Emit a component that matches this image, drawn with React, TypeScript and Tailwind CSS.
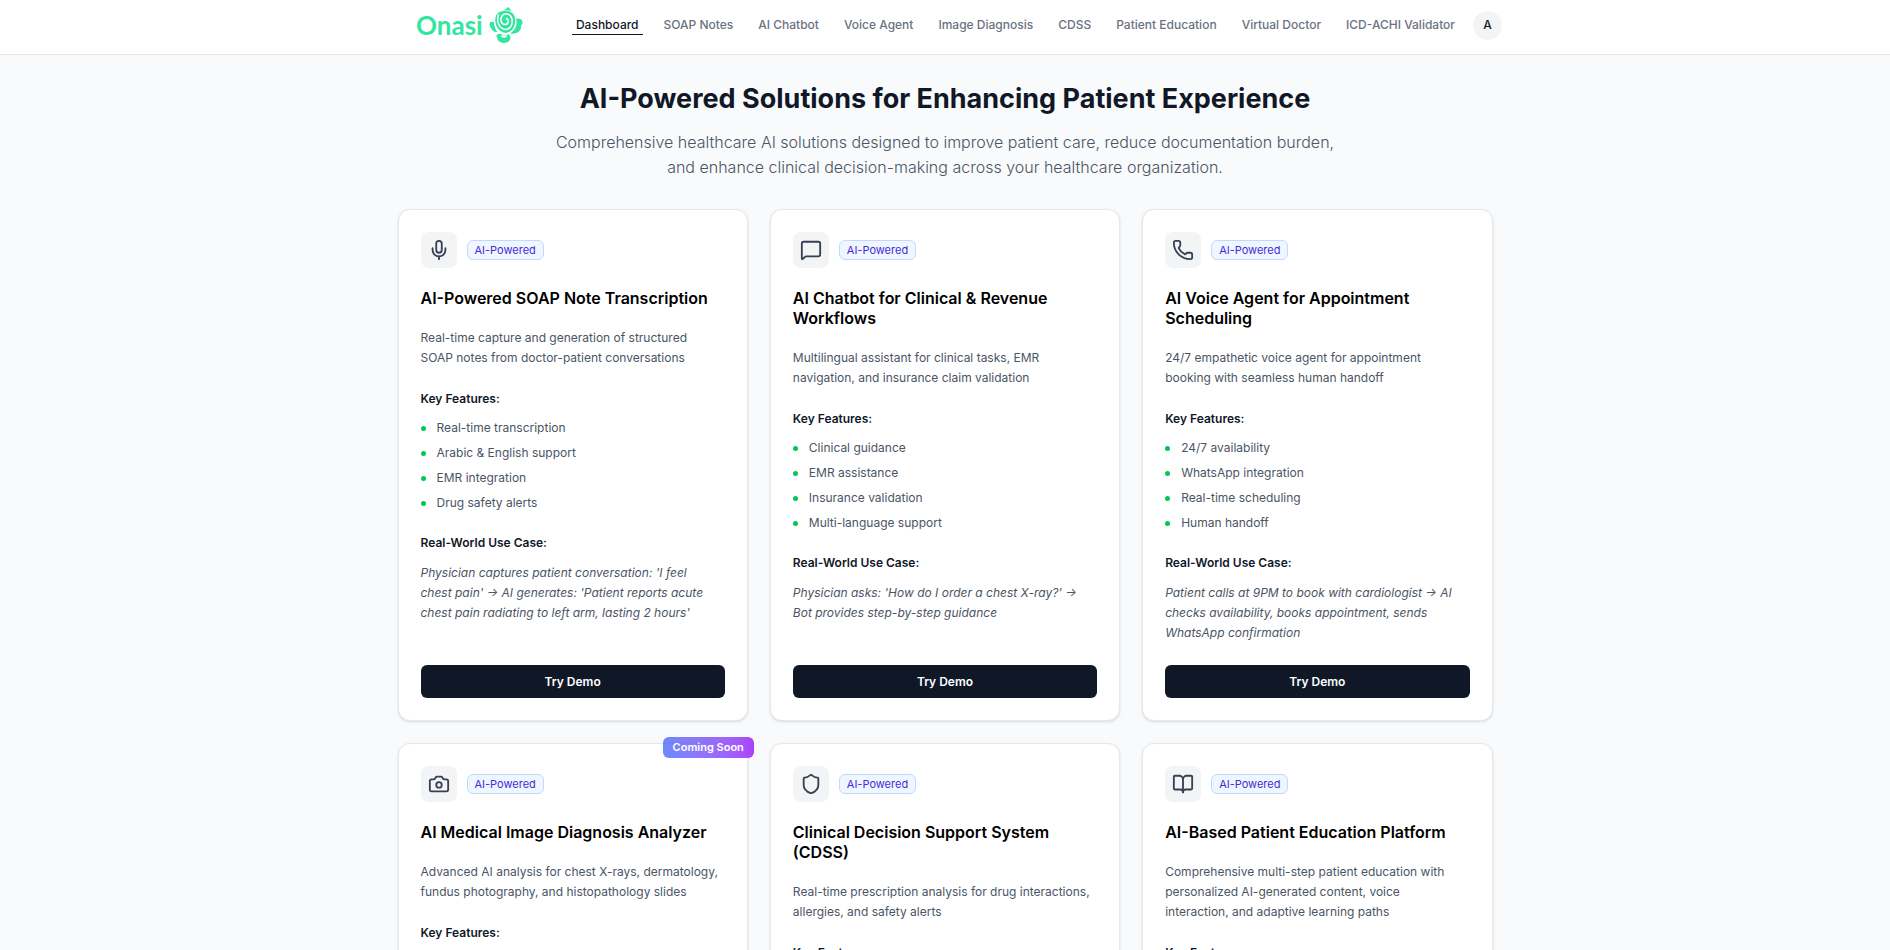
import {
  BookOpen,
  Camera,
  MessageSquare,
  Mic,
  Phone,
  Shield,
  type LucideIcon,
} from "lucide-react";

interface Solution {
  icon: LucideIcon;
  title: string;
  description: string;
  features: string[];
  useCase: string;
  comingSoon?: boolean;
}

const NAV_ITEMS = [
  "Dashboard",
  "SOAP Notes",
  "AI Chatbot",
  "Voice Agent",
  "Image Diagnosis",
  "CDSS",
  "Patient Education",
  "Virtual Doctor",
  "ICD-ACHI Validator",
];

const SOLUTIONS: Solution[] = [
  {
    icon: Mic,
    title: "AI-Powered SOAP Note Transcription",
    description: "Real-time capture and generation of structured SOAP notes from doctor-patient conversations",
    features: ["Real-time transcription", "Arabic & English support", "EMR integration", "Drug safety alerts"],
    useCase:
      "Physician captures patient conversation: 'I feel chest pain' → AI generates: 'Patient reports acute chest pain radiating to left arm, lasting 2 hours'",
  },
  {
    icon: MessageSquare,
    title: "AI Chatbot for Clinical & Revenue Workflows",
    description: "Multilingual assistant for clinical tasks, EMR navigation, and insurance claim validation",
    features: ["Clinical guidance", "EMR assistance", "Insurance validation", "Multi-language support"],
    useCase: "Physician asks: 'How do I order a chest X-ray?' → Bot provides step-by-step guidance",
  },
  {
    icon: Phone,
    title: "AI Voice Agent for Appointment Scheduling",
    description: "24/7 empathetic voice agent for appointment booking with seamless human handoff",
    features: ["24/7 availability", "WhatsApp integration", "Real-time scheduling", "Human handoff"],
    useCase:
      "Patient calls at 9PM to book with cardiologist → AI checks availability, books appointment, sends WhatsApp confirmation",
  },
  {
    icon: Camera,
    title: "AI Medical Image Diagnosis Analyzer",
    description: "Advanced AI analysis for chest X-rays, dermatology, fundus photography, and histopathology slides",
    features: ["Chest X-ray analysis", "Dermatology", "Fundus photography", "Histopathology"],
    useCase: "Physician uploads a chest X-ray → AI highlights findings for review",
    comingSoon: true,
  },
  {
    icon: Shield,
    title: "Clinical Decision Support System (CDSS)",
    description: "Real-time prescription analysis for drug interactions, allergies, and safety alerts",
    features: ["Drug interactions", "Allergy checks", "Safety alerts", "Prescription analysis"],
    useCase: "Physician prescribes a new drug → AI flags an interaction",
  },
  {
    icon: BookOpen,
    title: "AI-Based Patient Education Platform",
    description:
      "Comprehensive multi-step patient education with personalized AI-generated content, voice interaction, and adaptive learning paths",
    features: ["Multi-step education", "Personalized content", "Voice interaction", "Adaptive learning"],
    useCase: "Patient opens a lesson → AI adapts it to their answers",
  },
];

function Logo() {
  return (
    <a href="#" className="flex items-center gap-1.5 text-[#34e5a0]">
      <span className="font-[Lato,sans-serif] text-[26px] leading-8 font-bold">Onasi</span>
      <svg viewBox="0 0 34 36" className="h-9 w-[34px]" fill="none" aria-hidden="true">
        {/* outer petals */}
        <path d="M14 3.500C16 2.500 17.500 1.500 19.500 0c1 1.500 2 2.500 3 4-3-.9-5.500-1-8.500-.5Z" fill="currentColor" />
        <path d="M1 15c2 .3 3.500 0 4-.5 0 4.500 1 7.500 3.500 10.500-3 .5-5.500-1-6-3.500C.5 20 .3 17 1 15Z" fill="currentColor" />
        <path d="M27 11.500c3.500-.5 6 .8 6.500 3 .4 2-.5 3-1.500 4 .8 5-3.500 9-11 8 6-4 7.500-9 6-15Z" fill="currentColor" />
        <path d="M7.500 28c2-1.500 4-1.500 5.500-.5 2 1.200 4.500 1 6.500-.5 1 1 2 2.500 2 4-.5 3.500-3.500 5-7 5s-7-3-7-8Z" fill="currentColor" />
        <path d="M11.500 28.500c1.500 3 5.500 3 7 0Z" fill="white" />
        {/* bloom */}
        <path d="M8 7c4-4.500 14-4.500 17 1 3.500 7-.5 17.500-8.500 18C8 25.500 3.500 14 8 7Z" fill="currentColor" />
        <path
          d="M9.500 8c-2.500 6.500 1 14 7 14.500 5 0 7.500-5.500 6.500-10.500-1-5-7-7-10-3-2.500 4-.5 8.500 3 8.500 3.500-.3 4.500-4.500 1.500-6"
          stroke="white"
          strokeWidth="1.500"
          strokeLinecap="round"
        />
      </svg>
    </a>
  );
}

function Header() {
  return (
    <header className="border-b border-gray-200 bg-white">
      <div className="mx-auto flex max-w-[1114px] items-center justify-between pt-[7px] pb-[11px] pl-7">
        <Logo />
        <div className="flex items-center gap-3.5">
          <nav className="flex items-center gap-[17px] text-[12px] leading-[18px] font-medium text-gray-500">
            {NAV_ITEMS.map((item, i) => (
              <a
                key={item}
                href="#"
                aria-current={i === 0 ? "page" : undefined}
                className="border-b border-transparent px-1 whitespace-nowrap aria-[current=page]:border-gray-900 aria-[current=page]:text-gray-900"
              >
                {item}
              </a>
            ))}
          </nav>
          <button
            type="button"
            className="size-[29px] rounded-full bg-gray-100 text-[12px] font-medium text-gray-900"
          >
            A
          </button>
        </div>
      </div>
    </header>
  );
}

function SolutionCard({ icon: Icon, title, description, features, useCase, comingSoon }: Solution) {
  return (
    <article className="relative flex flex-col rounded-xl border border-gray-200 bg-white p-[22px] shadow-sm">
      {comingSoon && (
        <span className="absolute -top-[7px] -right-[7px] rounded-md bg-linear-to-r from-[#4a6cf8] to-purple-600 px-2.5 text-[11px] leading-[21px] font-semibold text-white opacity-80">
          Coming Soon
        </span>
      )}
      <div className="flex items-center gap-2.5">
        <span className="flex size-9 items-center justify-center rounded-lg bg-gray-100">
          <Icon className="size-[22px] text-gray-700" />
        </span>
        <span className="rounded-md border border-blue-200 bg-blue-50 px-[7px] text-[11px] leading-[18px] text-indigo-700">
          AI-Powered
        </span>
      </div>
      <h2 className="mt-5 text-[16px] leading-5 font-semibold text-black">{title}</h2>
      <p className="mt-5 pr-1.5 text-[12px] leading-5 text-gray-600">{description}</p>

      <h3 className="mt-[22px] text-[12px] leading-[18px] font-semibold text-gray-900">Key Features:</h3>
      <ul className="mt-[11px] flex flex-col gap-[7px] text-[12px] leading-[18px] text-gray-600">
        {features.map((feature) => (
          <li key={feature} className="flex items-center gap-[11px]">
            <span className="size-[5px] rounded-full bg-green-500" />
            {feature}
          </li>
        ))}
      </ul>

      <h3 className="mt-[22px] text-[12px] leading-[18px] font-semibold text-gray-900">
        Real-World Use Case:
      </h3>
      <p className="mt-[11px] mb-[22px] pr-1.5 text-[12px] leading-5 text-gray-600 italic">{useCase}</p>

      <button
        type="button"
        className="mt-auto h-[33px] w-full rounded-md bg-gray-900 text-[12px] font-semibold text-white"
      >
        Try Demo
      </button>
    </article>
  );
}

export default function App() {
  return (
    <div className="min-h-screen bg-gray-50 font-[Inter,sans-serif]">
      <Header />
      <main className="mx-auto max-w-[1095px] pt-[26px] pb-7">
        <div className="mx-auto mb-[29px] max-w-[800px] text-center">
          <h1 className="text-[27px] leading-9 font-bold text-gray-900">
            AI-Powered Solutions for Enhancing Patient Experience
          </h1>
          <p className="mt-[13px] text-[16px] leading-[25px] font-light text-gray-600">
            Comprehensive healthcare AI solutions designed to improve patient care, reduce documentation
            burden, and enhance clinical decision-making across your healthcare organization.
          </p>
        </div>
        <div className="grid grid-cols-3 gap-[22px]">
          {SOLUTIONS.map((solution) => (
            <SolutionCard key={solution.title} {...solution} />
          ))}
        </div>
      </main>
    </div>
  );
}
